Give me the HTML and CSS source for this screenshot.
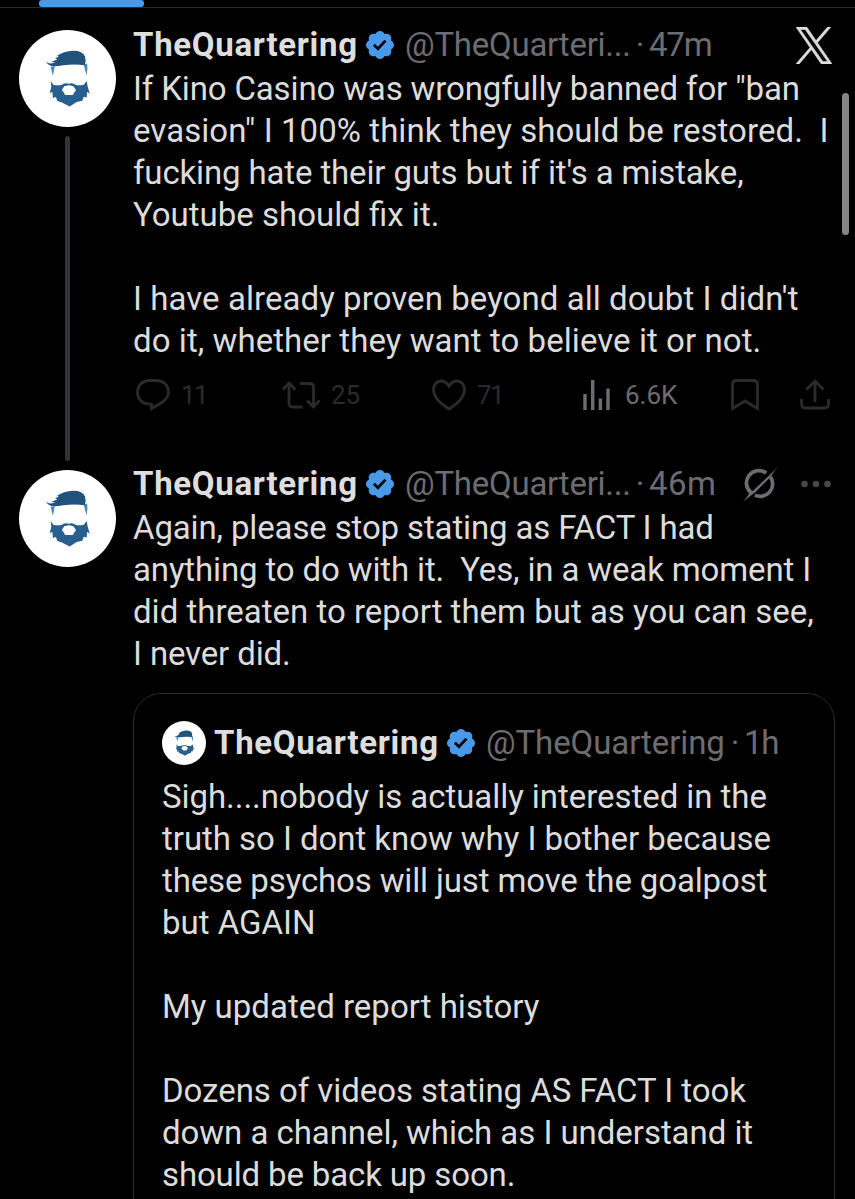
FILE: index.html
```
<!DOCTYPE html>
<html lang="en">
<head>
    <meta charset="UTF-8">
    <title>TheQuartering</title>
    <link rel="stylesheet" href="styles.css">
</head>
<body>
    <!-- shared shapes -->
    <svg class="defs" width="0" height="0">
        <symbol id="avatar" viewBox="-17.5 -29.5 290 290">
            <path fill="#4686b8" d="M77 80l13-1-3 12-3 17-4-16zM176 74l10-3 1 14-2 22-5-17z"/>
            <path fill="#20527c" d="M63 65q5 6 15 6l14-3-14-2 19-7-7-5 11-3-4-4q18-12 40-14 35-3 43 17 4 14-1 26-30-4-64 0-20 4-31 3-14-1-21-14z"/>
            <path fill="#285f8f" fill-rule="evenodd" d="M77 123l8 11q14 4 26 0 10-7 20-3 10-4 20 3 12 4 25 0l9-11 3 17 6 20-8-4-1 16-9-2-4 12-17 4-21 13-23-12-14-4-4-12-9 3-2-19-8 5 5-20zM124 137q-8 0-9 6-5 4-3 9 1 4 5 5 1 8 9 8h12q8 0 9-8 5-1 5-6 1-5-4-8-2-6-9-6-7-3-15 0z"/>
        </symbol>
        <symbol id="verified" viewBox="1.75 1.75 20.5 20.5">
            <path fill="#4a99e9" d="M22.25 12c0-1.43-.88-2.67-2.19-3.34.46-1.39.2-2.9-.81-3.91s-2.52-1.27-3.91-.81c-.66-1.31-1.91-2.19-3.34-2.19s-2.67.88-3.33 2.19c-1.4-.46-2.91-.2-3.92.81s-1.26 2.52-.8 3.91c-1.31.67-2.2 1.91-2.2 3.34s.89 2.67 2.2 3.34c-.46 1.39-.21 2.9.8 3.91s2.52 1.26 3.91.81c.67 1.31 1.91 2.19 3.34 2.19s2.68-.88 3.34-2.19c1.39.45 2.9.2 3.91-.81s1.27-2.52.81-3.91c1.31-.67 2.19-1.91 2.19-3.34zm-11.71 4.2L6.8 12.46l1.41-1.42 2.26 2.26 4.8-5.23 1.47 1.36-6.2 6.77z"/>
        </symbol>
    </svg>

    <div class="tabs"><div class="tab-active"></div></div>

    <!-- first post -->
    <div class="post">
        <div class="side">
            <svg class="avatar"><use href="#avatar"/></svg>
            <div class="thread"></div>
        </div>
        <div class="main">
            <div class="head">
                <span class="name">TheQuartering</span>
                <svg class="verified"><use href="#verified"/></svg>
                <span class="handle cut">@TheQuarteri...</span>
                <span class="dot">·</span>
                <span class="time short">47m</span>
                <svg class="logo" viewBox="0 0 1200 1227"><path d="M714.163 519.284L1160.89 0H1055.03L667.137 450.887L357.328 0H0L468.492 681.821L0 1226.37H105.866L515.491 750.218L842.672 1226.37H1200L714.137 519.284H714.163ZM569.165 687.828L521.697 619.934L144.011 79.6944H306.615L611.412 515.685L658.88 583.579L1055.08 1150.3H892.476L569.165 687.854V687.828Z"/></svg>
            </div>
            <div class="text">
                <p class="tight">If Kino Casino was wrongfully banned for "ban</p>
                <p class="wide">evasion" I 100% think they should be restored.  I</p>
                <p class="tight">fucking hate their guts but if it's a mistake,</p>
                <p>Youtube should fix it.</p>
                <p class="blank"></p>
                <p class="wide">I have already proven beyond all doubt I didn't</p>
                <p class="wide">do it, whether they want to believe it or not.</p>
            </div>
            <div class="actions">
                <div class="action reply">
                    <svg width="34" height="32" viewBox="0 0 34 32"><path d="M13.5 1.5h7c7 0 12 5 12 11.300c0 5-3 8.500-7 11L15.500 29.500v-4.300h-2C6.500 25.200 1.500 20.200 1.500 13.300S6.500 1.500 13.500 1.500z"/></svg>
                    <span>11</span>
                </div>
                <div class="action repost">
                    <svg width="38" height="32" viewBox="0 0 38 32"><path d="M.8 10.500L7 4l6.200 6.500M7 4.500V24q0 4 4 4h9.500M18 4.500h9.500q4 0 4 4V28M25.200 21.500l6.200 6.500 6.200-6.500"/></svg>
                    <span>25</span>
                </div>
                <div class="action like">
                    <svg width="34" height="32" viewBox="0 0 34 32"><path d="M17 7C14.500 3 11.500 2 9 2 4.500 2 1.500 5.800 1.500 10.500 1.500 18 8 24.500 17 30c9-5.500 15.500-12 15.500-19.500C32.500 5.800 29.500 2 25 2c-2.500 0-5.500 1-8 5z"/></svg>
                    <span>71</span>
                </div>
                <div class="action views">
                    <svg width="28" height="32" viewBox="0 0 28 32"><path d="M2 15v16M9.700 1v30M17.400 19.500V31M25 9.500V31"/></svg>
                    <span>6.6K</span>
                </div>
                <div class="action save">
                    <svg width="28" height="32" viewBox="0 0 28 32"><path d="M1.500 29.500V5.500q0-4 4-4h17q4 0 4 4v24L14 22z"/></svg>
                </div>
                <div class="action share">
                    <svg width="30" height="32" viewBox="0 0 30 32"><path d="M6.500 10.500L15 2l8.500 8.500M15 2.500V23M1.500 20v5q0 4 4 4h19q4 0 4-4v-5"/></svg>
                </div>
            </div>
        </div>
    </div>

    <!-- second post -->
    <div class="post last">
        <div class="side">
            <svg class="avatar"><use href="#avatar"/></svg>
        </div>
        <div class="main">
            <div class="head">
                <span class="name">TheQuartering</span>
                <svg class="verified"><use href="#verified"/></svg>
                <span class="handle cut">@TheQuarteri...</span>
                <span class="dot">·</span>
                <span class="time">46m</span>
                <svg class="grok" viewBox="0 0 34 34">
                    <path class="ring" d="M8.300 25.200A12 12 0 0 1 22.500 5.800M26.700 9.800A12 12 0 0 1 11.500 27.300"/>
                    <path class="slash" d="M0 33.500Q4.500 29 6.200 25.500L10 22.800 34 0Q29 5.500 27.500 9L12 24.500z"/>
                </svg>
                <svg class="more" viewBox="0 0 30 8"><circle cx="3.500" cy="4" r="3.300"/><circle cx="15" cy="4" r="3.300"/><circle cx="26.500" cy="4" r="3.300"/></svg>
            </div>
            <div class="text">
                <p class="tight">Again, please stop stating as FACT I had</p>
                <p class="tight">anything to do with it.  Yes, in a weak moment I</p>
                <p>did threaten to report them but as you can see,</p>
                <p class="tight">I never did.</p>
            </div>
            <!-- quoted post -->
            <div class="quote">
                <div class="head">
                    <svg class="avatar small"><use href="#avatar"/></svg>
                    <span class="name">TheQuartering</span>
                    <svg class="verified"><use href="#verified"/></svg>
                    <span class="handle">@TheQuartering</span>
                    <span class="dot">·</span>
                    <span class="time short">1h</span>
                </div>
                <div class="text">
                    <p class="snug">Sigh....nobody is actually interested in the</p>
                    <p class="snug">truth so I dont know why I bother because</p>
                    <p class="tight">these psychos will just move the goalpost</p>
                    <p>but AGAIN</p>
                    <p class="blank"></p>
                    <p>My updated report history</p>
                    <p class="blank"></p>
                    <p class="snug">Dozens of videos stating AS FACT I took</p>
                    <p class="snug">down a channel, which as I understand it</p>
                    <p class="tight">should be back up soon.</p>
                </div>
            </div>
        </div>
    </div>

    <div class="scrollbar"></div>
</body>
</html>
```
FILE: styles.css
```
* {
    box-sizing: border-box;
}
body {
    margin: 0;
    height: 1199px;
    overflow: hidden;
    position: relative;
    background: #000;
    color: #dcdcdc;
    font-family: Roboto, "Liberation Sans", sans-serif;
    font-size: 33px;
    line-height: 42px;
}
svg {
    display: block;
    flex: none;
}
.defs {
    position: absolute;
}

/* tab bar */
.tabs {
    height: 8px;
    padding-left: 39px;
    border-bottom: 1px solid #2b2b2d;
}
.tab-active {
    width: 105px;
    height: 7px;
    border-radius: 3px;
    background: #4a99e9;
}

/* post */
.post {
    display: flex;
    height: 453px;
    padding: 22px 20px 0 19px;
}
.side {
    display: flex;
    flex-direction: column;
    align-items: center;
    flex: none;
    width: 97px;
    margin-right: 17px;
}
.avatar {
    width: 97px;
    height: 97px;
    border-radius: 50%;
    background: #fff;
}
.avatar.small {
    width: 44px;
    height: 44px;
    margin-right: 8px;
}
.thread {
    width: 5px;
    height: 325px;
    margin-top: 9px;
    border-radius: 3px;
    background: #333335;
}
.main {
    flex: 1;
    min-width: 0;
    margin-top: -7px;
}
.last {
    height: auto;
    padding-top: 9px;
}
.last .main {
    margin-top: -8px;
}

.head {
    display: flex;
    align-items: center;
    height: 45px;
    padding-bottom: 1px;
    white-space: nowrap;
    color: #6d6d71;
}
.name {
    width: 225px;
    color: #dedede;
    font-weight: 700;
    letter-spacing: 0.7px;
}
.verified {
    width: 28px;
    height: 28px;
    margin: 0 11px 0 8px;
}
.handle {
    width: 240px;
    letter-spacing: -0.1px;
}
.handle.cut {
    width: 226px;
    letter-spacing: -0.25px;
}
.dot {
    width: 18px;
    text-align: center;
}
.time {
    letter-spacing: 0.4px;
}
.time.short {
    letter-spacing: -1.2px;
}
.logo {
    width: 36px;
    height: 37px;
    margin-left: auto;
    margin-right: 3px;
    fill: #dcdcdc;
    stroke: #dcdcdc;
    stroke-width: 22px;
}
.grok {
    width: 35px;
    height: 35px;
    margin-left: auto;
    margin-right: 23px;
}
.grok .ring {
    fill: none;
    stroke: #6d6d71;
    stroke-width: 3.6;
}
.grok .slash {
    fill: #6d6d71;
}
.more {
    width: 30px;
    height: 8px;
    margin-right: 4px;
    fill: #48484b;
}

.text p {
    margin: 0;
    height: 42px;
    white-space: pre;
}
.text .tight {
    letter-spacing: -0.14px;
}
.text .snug {
    letter-spacing: -0.05px;
}
.text .wide {
    letter-spacing: 0.06px;
}

/* action row */
.actions {
    display: grid;
    grid-template-columns: 146px 150px 151px 148px 69px 30px;
    height: 42px;
    margin-top: 12px;
    padding-left: 3px;
    color: #2b2b2e;
    font-size: 26px;
}
.action {
    display: flex;
    align-items: center;
    gap: 11px;
}
.action path {
    fill: none;
    stroke: currentColor;
    stroke-width: 2.8;
}
.reply span,
.like span {
    letter-spacing: -1.5px;
}
.views {
    gap: 14px;
    color: #6d6d71;
}
.views path {
    stroke-width: 3.4;
}

/* quoted post */
.quote {
    width: 702px;
    height: 540px;
    margin-top: 18px;
    padding: 27px 28px;
    border: 1px solid #2b2b2d;
    border-radius: 28px;
}
.quote .head {
    height: 44px;
    padding: 0;
    margin-bottom: 11px;
}

.scrollbar {
    position: absolute;
    top: 93px;
    right: 6px;
    width: 7px;
    height: 142px;
    border-radius: 4px;
    background: #858585;
}
```
